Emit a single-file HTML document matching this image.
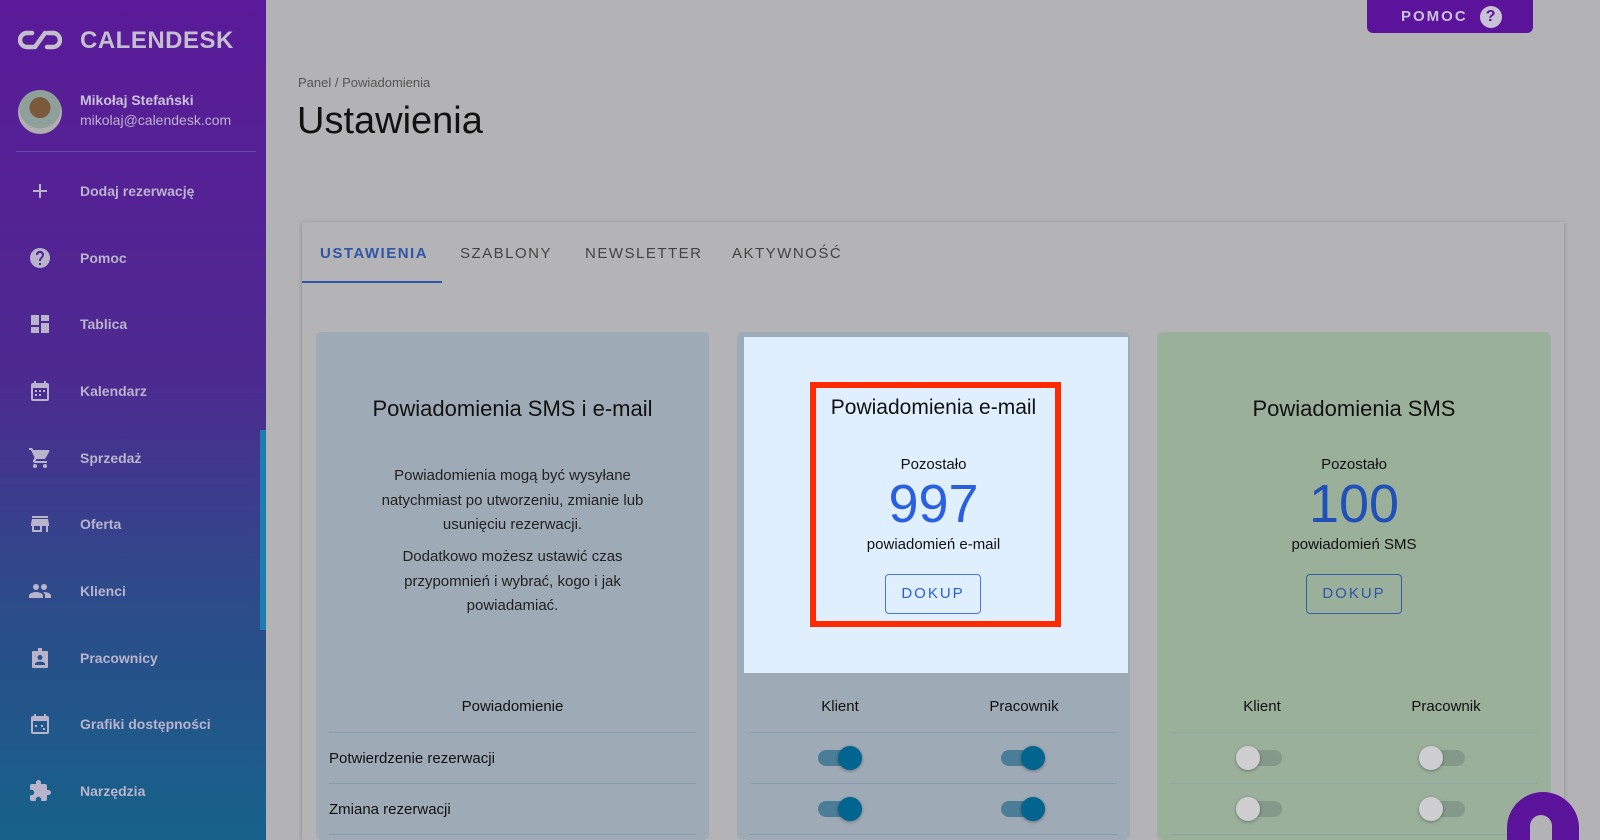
<!DOCTYPE html>
<html style="width:1600px;height:840px;overflow:hidden"><head><meta charset="utf-8"><style>
*{margin:0;padding:0;box-sizing:border-box}
body{width:1600px;height:840px;overflow:hidden;background:#b3b2b5;font-family:"Liberation Sans",sans-serif;position:relative;color:#111}
.abs{position:absolute}
#side{left:0;top:0;width:266px;height:840px;background:linear-gradient(180deg,#5b1a99 0%,#4d2a90 45%,#2e4a8a 70%,#16628a 100%)}
.mi{position:absolute;left:0;width:266px;height:30px;display:flex;align-items:center;color:#b9b3cc;font-size:14px;font-weight:bold}
.mi svg{position:absolute;left:28px;width:24px;height:24px;fill:#b9b3cc}
.mi span{position:absolute;left:80px}
.c{text-align:center;position:absolute}
.card{position:absolute;top:332px;height:520px;border-radius:6px}
.tg{position:absolute;width:44px;height:16px;border-radius:8px}
.tg i{position:absolute;top:-4px;width:24px;height:24px;border-radius:50%;box-shadow:0 1px 3px rgba(0,0,0,.35)}
.on{background:#4b7d98}.on i{left:20px;background:#02658f}
.off{background:#85998a}.off i{left:-2px;background:#cfcfd2}
.hl{position:absolute;height:1px;background:#8a9bab}
</style></head><body>
<div id="side" class="abs">
 <svg class="abs" style="left:18px;top:30px" width="44" height="20" viewBox="0 0 44 20"><path d="M14 3H9a7 7 0 0 0 0 14h6M30 3h5a7 7 0 0 1 0 14h-6M17 17l10-14" stroke="#c3bfcf" stroke-width="4.5" fill="none" stroke-linecap="round"/></svg>
 <div class="abs" style="left:80px;top:27px;font-size:24px;font-weight:bold;color:#c3bfcf;letter-spacing:0.5px">CALENDESK</div>
 <div class="abs" style="left:18px;top:90px;width:44px;height:44px;border-radius:50%;background:radial-gradient(circle at 50% 40%,#7a5a3a 0 30%,#8fa09a 31% 60%,#b0b0b0 61%)"></div>
 <div class="abs" style="left:80px;top:92px;font-size:14px;font-weight:bold;color:#c9c3d8">Mikołaj Stefański</div>
 <div class="abs" style="left:80px;top:112px;font-size:14px;color:#b9b3cc">mikolaj@calendesk.com</div>
 <div class="abs" style="left:16px;top:151px;width:240px;height:1px;background:#6b4aa5"></div>
 <div class="mi" style="top:176px"><svg viewBox="0 0 24 24"><path d="M19 13h-6v6h-2v-6H5v-2h6V5h2v6h6z"/></svg><span>Dodaj rezerwację</span></div>
 <div class="mi" style="top:243px"><svg viewBox="0 0 24 24"><path d="M12 2a10 10 0 1 0 0 20 10 10 0 0 0 0-20zm1 17h-2v-2h2zm2.1-7.7-.9.9C13.5 12.9 13 13.5 13 15h-2v-.5c0-1.1.5-2.1 1.2-2.8l1.2-1.3A2 2 0 1 0 10 9H8a4 4 0 1 1 7.1 2.3z"/></svg><span>Pomoc</span></div>
 <div class="mi" style="top:309px"><svg viewBox="0 0 24 24"><path d="M3 13h8V3H3zm0 8h8v-6H3zm10 0h8V11h-8zm0-18v6h8V3z"/></svg><span>Tablica</span></div>
 <div class="mi" style="top:376px"><svg viewBox="0 0 24 24"><path d="M19 4h-1V2h-2v2H8V2H6v2H5a2 2 0 0 0-2 2v14a2 2 0 0 0 2 2h14a2 2 0 0 0 2-2V6a2 2 0 0 0-2-2zm0 16H5V9h14zM7 11h2v2H7zm4 0h2v2h-2zm4 0h2v2h-2zm-8 4h2v2H7zm4 0h2v2h-2z"/></svg><span>Kalendarz</span></div>
 <div class="mi" style="top:443px"><svg viewBox="0 0 24 24"><path d="M7 18a2 2 0 1 0 0 4 2 2 0 0 0 0-4zM1 2v2h2l3.6 7.6-1.4 2.4A2 2 0 0 0 7 17h12v-2H7.4l1.1-2h7.5a2 2 0 0 0 1.7-1l3.6-6.5A1 1 0 0 0 20.4 4H5.2l-.9-2zm16 16a2 2 0 1 0 0 4 2 2 0 0 0 0-4z"/></svg><span>Sprzedaż</span></div>
 <div class="mi" style="top:509px"><svg viewBox="0 0 24 24"><path d="M20 4H4v2h16zm1 10v-2l-1-5H4l-1 5v2h1v6h10v-6h4v6h2v-6zm-9 4H6v-4h6z"/></svg><span>Oferta</span></div>
 <div class="mi" style="top:576px"><svg viewBox="0 0 24 24"><path d="M16 11a3 3 0 1 0 0-6 3 3 0 0 0 0 6zm-8 0a3 3 0 1 0 0-6 3 3 0 0 0 0 6zm0 2c-2.3 0-7 1.2-7 3.5V19h14v-2.5C15 14.2 10.3 13 8 13zm8 0h-1c1.2.8 2 2 2 3.5V19h6v-2.5c0-2.3-4.7-3.5-7-3.5z"/></svg><span>Klienci</span></div>
 <div class="mi" style="top:643px"><svg viewBox="0 0 24 24"><path d="M19 5h-5V2h-4v3H5a1 1 0 0 0-1 1v15a1 1 0 0 0 1 1h14a1 1 0 0 0 1-1V6a1 1 0 0 0-1-1zm-7 4a2.5 2.5 0 1 1 0 5 2.5 2.5 0 0 1 0-5zm5 10H7v-1c0-1.7 3.3-2.5 5-2.5s5 .8 5 2.5z"/></svg><span>Pracownicy</span></div>
 <div class="mi" style="top:709px"><svg viewBox="0 0 24 24"><path d="M19 4h-1V2h-2v2H8V2H6v2H5a2 2 0 0 0-2 2v14a2 2 0 0 0 2 2h14a2 2 0 0 0 2-2V6a2 2 0 0 0-2-2zm0 16H5V9h14zM7 13h2v2H7zm6 0h2v2h-2zm2 3h2v2h-2z"/></svg><span>Grafiki dostępności</span></div>
 <div class="mi" style="top:776px"><svg viewBox="0 0 24 24"><path d="M20.5 11H19V7a2 2 0 0 0-2-2h-4V3.5a2.5 2.5 0 0 0-5 0V5H4a2 2 0 0 0-2 2v3.8h1.5a2.7 2.7 0 0 1 0 5.4H2V20a2 2 0 0 0 2 2h3.8v-1.5a2.7 2.7 0 0 1 5.4 0V22H17a2 2 0 0 0 2-2v-4h1.5a2.5 2.5 0 0 0 0-5z"/></svg><span>Narzędzia</span></div>
 <div class="abs" style="left:260px;top:430px;width:6px;height:200px;background:#1a7fb0"></div>
</div>
<div class="abs" style="left:1367px;top:0;width:166px;height:33px;background:#5a139a;border-radius:0 0 6px 6px;color:#c8c2d6;font-size:15px;font-weight:bold;letter-spacing:2px;display:flex;align-items:center;padding-left:34px">POMOC<span style="margin-left:12px;width:22px;height:22px;border-radius:50%;background:#c8c2d6;color:#5a139a;font-size:16px;letter-spacing:0;text-align:center;line-height:22px">?</span></div>
<div class="abs" style="left:298px;top:75px;font-size:13px;color:#555">Panel / Powiadomienia</div>
<div class="abs" style="left:297px;top:100px;font-size:38px;color:#111">Ustawienia</div>
<div class="abs" style="left:302px;top:222px;width:1262px;height:618px;background:#b4b3b6;box-shadow:0 1px 4px rgba(0,0,0,.25)"></div>
<div class="abs" style="left:320px;top:245px;font-size:15px;letter-spacing:1.5px;color:#2f55a8;font-weight:bold">USTAWIENIA</div>
<div class="abs" style="left:460px;top:245px;font-size:15px;letter-spacing:1.5px;color:#444">SZABLONY</div>
<div class="abs" style="left:585px;top:245px;font-size:15px;letter-spacing:1.5px;color:#444">NEWSLETTER</div>
<div class="abs" style="left:732px;top:245px;font-size:15px;letter-spacing:1.5px;color:#444">AKTYWNOŚĆ</div>
<div class="abs" style="left:302px;top:281px;width:140px;height:2px;background:#2f55a8"></div>

<div class="card" style="left:316px;width:393px;height:508px;background:#9eaab6"></div>
<div class="card" style="left:737px;width:393px;height:508px;background:#9eaab6"></div>
<div class="card" style="left:1157px;width:394px;height:508px;background:#9bb09b"></div>
<div class="abs" style="left:744px;top:337px;width:384px;height:336px;background:#e0effd"></div>

<div class="c" style="left:316px;width:393px;top:396px;font-size:22px">Powiadomienia SMS i e-mail</div>
<div class="c" style="left:366px;width:293px;top:464px;font-size:15px;line-height:24.5px;color:#222">Powiadomienia mogą być wysyłane natychmiast po utworzeniu, zmianie lub usunięciu rezerwacji.</div>
<div class="c" style="left:376px;width:273px;top:545px;font-size:15px;line-height:24.5px;color:#222">Dodatkowo możesz ustawić czas przypomnień i wybrać, kogo i jak powiadamiać.</div>

<div class="abs" style="left:810px;top:382px;width:251px;height:245px;border:6px solid #ff2a00"></div>
<div class="c" style="left:737px;width:393px;top:396px;font-size:21px">Powiadomienia e-mail</div>
<div class="c" style="left:737px;width:393px;top:456px;font-size:15px">Pozostało</div>
<div class="c" style="left:737px;width:393px;top:473px;font-size:54px;color:#2a5fe0">997</div>
<div class="c" style="left:737px;width:393px;top:536px;font-size:15px">powiadomień e-mail</div>
<div class="abs" style="left:885px;top:574px;width:96px;height:40px;border:1px solid #4a78e0;border-radius:4px;color:#2a5fe0;font-size:15px;letter-spacing:2px;text-align:center;line-height:38px">DOKUP</div>

<div class="c" style="left:1157px;width:394px;top:396px;font-size:22px">Powiadomienia SMS</div>
<div class="c" style="left:1157px;width:394px;top:456px;font-size:15px">Pozostało</div>
<div class="c" style="left:1157px;width:394px;top:473px;font-size:54px;color:#2150b8">100</div>
<div class="c" style="left:1157px;width:394px;top:536px;font-size:15px">powiadomień SMS</div>
<div class="abs" style="left:1306px;top:574px;width:96px;height:40px;border:1px solid #3a5aa8;border-radius:4px;color:#2f55a8;font-size:15px;letter-spacing:2px;text-align:center;line-height:38px">DOKUP</div>

<div class="c" style="left:316px;width:393px;top:698px;font-size:15px">Powiadomienie</div>
<div class="c" style="left:780px;width:120px;top:698px;font-size:15px">Klient</div>
<div class="c" style="left:964px;width:120px;top:698px;font-size:15px">Pracownik</div>
<div class="c" style="left:1202px;width:120px;top:698px;font-size:15px">Klient</div>
<div class="c" style="left:1386px;width:120px;top:698px;font-size:15px">Pracownik</div>
<div class="abs" style="left:329px;top:750px;font-size:15px">Potwierdzenie rezerwacji</div>
<div class="abs" style="left:329px;top:801px;font-size:15px">Zmiana rezerwacji</div>

<div class="hl" style="left:329px;top:732px;width:367px"></div><div class="hl" style="left:329px;top:783px;width:367px"></div><div class="hl" style="left:329px;top:834px;width:367px"></div>
<div class="hl" style="left:750px;top:732px;width:367px"></div><div class="hl" style="left:750px;top:783px;width:367px"></div><div class="hl" style="left:750px;top:834px;width:367px"></div>
<div class="hl" style="left:1170px;top:732px;width:367px;background:#8ea6a8"></div><div class="hl" style="left:1170px;top:783px;width:367px;background:#8ea6a8"></div><div class="hl" style="left:1170px;top:834px;width:367px;background:#8ea6a8"></div>

<div class="tg on" style="left:818px;top:750px"><i></i></div>
<div class="tg on" style="left:1001px;top:750px"><i></i></div>
<div class="tg on" style="left:818px;top:801px"><i></i></div>
<div class="tg on" style="left:1001px;top:801px"><i></i></div>
<div class="tg off" style="left:1238px;top:750px"><i></i></div>
<div class="tg off" style="left:1421px;top:750px"><i></i></div>
<div class="tg off" style="left:1238px;top:801px"><i></i></div>
<div class="tg off" style="left:1421px;top:801px"><i></i></div>

<div class="abs" style="left:1507px;top:792px;width:72px;height:48px;border-radius:36px 36px 0 0;background:#5a139a"></div>
<div class="abs" style="left:1530px;top:815px;width:22px;height:25px;border-radius:11px 11px 0 0;background:#b3b2b5"></div>
</body></html>
